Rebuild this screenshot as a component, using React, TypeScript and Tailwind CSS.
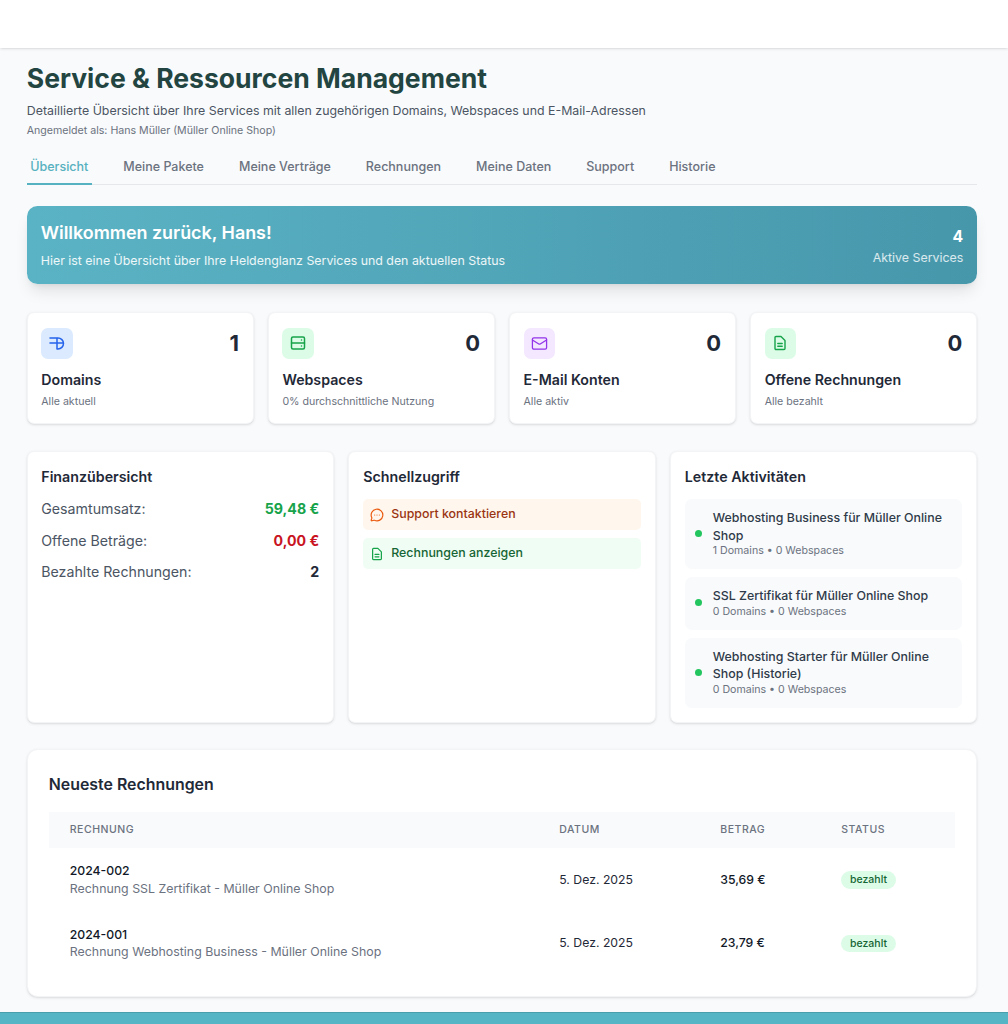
import { Mail, MessageCircleMore } from 'lucide-react'

const tabs = ['Übersicht', 'Meine Pakete', 'Meine Verträge', 'Rechnungen', 'Meine Daten', 'Support', 'Historie']

function DomainIcon() {
  return (
    <svg viewBox="0 0 16 16" className="h-4 w-4 text-[#2563eb]" fill="none" stroke="currentColor" strokeWidth="1.5" strokeLinecap="round" strokeLinejoin="round">
      <path d="M1 3h8a5.5 5.5 0 0 1 0 11H8V3M1 8h13" />
    </svg>
  )
}

function ServerIcon() {
  return (
    <svg viewBox="0 0 16 16" className="h-4 w-4 text-[#16a34a]" fill="none" stroke="currentColor" strokeWidth="1.5" strokeLinecap="round" strokeLinejoin="round">
      <rect x="1.5" y="2" width="13" height="12" rx="1.5" />
      <path d="M1.5 8h13M11.5 5h.01M11.5 11h.01" />
    </svg>
  )
}

function DocIcon({ className }: { className: string }) {
  return (
    <svg viewBox="0 0 16 16" className={className} fill="none" stroke="currentColor" strokeWidth="1.4" strokeLinecap="round" strokeLinejoin="round">
      <path d="M4 1.5h5l4 4v8a1 1 0 0 1-1 1H4a1 1 0 0 1-1-1v-11a1 1 0 0 1 1-1z" />
      <path d="M5.8 8.5h4.4M5.8 11.2h4.4" />
    </svg>
  )
}

const stats = [
  { title: 'Domains', sub: 'Alle aktuell', value: '1', box: 'bg-[#dbeafe]', icon: <DomainIcon /> },
  { title: 'Webspaces', sub: '0% durchschnittliche Nutzung', value: '0', box: 'bg-[#dcfce7]', icon: <ServerIcon /> },
  { title: 'E-Mail Konten', sub: 'Alle aktiv', value: '0', box: 'bg-[#f3e8ff]', icon: <Mail className="h-[17px] w-[17px] text-[#9333ea]" strokeWidth={1.8} /> },
  { title: 'Offene Rechnungen', sub: 'Alle bezahlt', value: '0', box: 'bg-[#dcfce7]', icon: <DocIcon className="h-4 w-4 text-[#16a34a]" /> },
]

const activities = [
  { title: 'Webhosting Business für Müller Online Shop', sub: '1 Domains • 0 Webspaces' },
  { title: 'SSL Zertifikat für Müller Online Shop', sub: '0 Domains • 0 Webspaces' },
  { title: 'Webhosting Starter für Müller Online Shop (Historie)', sub: '0 Domains • 0 Webspaces' },
]

const invoices = [
  { nr: '2024-002', desc: 'Rechnung SSL Zertifikat - Müller Online Shop', date: '5. Dez. 2025', sum: '35,69 €' },
  { nr: '2024-001', desc: 'Rechnung Webhosting Business - Müller Online Shop', date: '5. Dez. 2025', sum: '23,79 €' },
]

export default function App() {
  return (
    <div className="flex min-h-[1024px] flex-col bg-[#f9fafb] font-['Inter',sans-serif]">
      <header className="h-[48px] bg-white shadow-sm" />

      <main className="flex-1 pt-[15px] pr-[30.75px] pb-[15px] pl-[26.75px]">
        <h1 className="text-[26.55px] leading-[31.5px] font-bold text-[#234542]">Service &amp; Ressourcen Management</h1>
        <p className="mt-[7px] text-[12.39px] leading-[17.5px] text-[#4b5563]">
          Detaillierte Übersicht über Ihre Services mit allen zugehörigen Domains, Webspaces und E-Mail-Adressen
        </p>
        <p className="mt-[4.5px] text-[10.62px] leading-[14px] text-[#6b7280]">Angemeldet als: Hans Müller (Müller Online Shop)</p>

        {/* Tabs */}
        <nav className="mt-[14px] flex gap-[28px] border-b border-[#e5e7eb]">
          {tabs.map((t, i) => (
            <span
              key={t}
              className={
                i === 0
                  ? 'border-b-2 border-[#56b1c0] px-[3.5px] pt-[6px] pb-[7.5px] text-[12.5px] leading-[17.5px] font-[450] text-[#56b1c0] -mb-px'
                  : 'border-b-2 border-transparent px-[3.5px] pt-[6px] pb-[7.5px] text-[12.5px] leading-[17.5px] font-[450] text-[#6b7280] -mb-px'
              }
            >
              {t}
            </span>
          ))}
        </nav>

        {/* Welcome banner */}
        <section className="mt-[21px] flex h-[78px] items-center justify-between rounded-[10.5px] bg-gradient-to-r from-[#5ab3c4] to-[#4797ab] px-[14px] pt-[2px] text-white shadow-lg">
          <div>
            <h2 className="text-[17.9px] leading-[24.5px] font-semibold">Willkommen zurück, Hans!</h2>
            <p className="mt-[6.5px] text-[12.39px] leading-[17.5px] text-white/90">
              Hier ist eine Übersicht über Ihre Heldenglanz Services und den aktuellen Status
            </p>
          </div>
          <div className="text-right">
            <div className="text-[15.75px] leading-[24.5px] font-bold">4</div>
            <div className="text-[12.39px] leading-[17.5px] text-white/80">Aktive Services</div>
          </div>
        </section>

        {/* Stat cards */}
        <section className="mt-[28px] grid grid-cols-4 gap-[14px]">
          {stats.map((s) => (
            <div key={s.title} className="rounded-[7px] border border-[#f3f4f6] bg-white pt-[15px] pr-[14px] pb-[14px] pl-[13.5px] shadow-sm">
              <div className="flex items-center justify-between">
                <div className={`flex h-[31.5px] w-[31.5px] items-center justify-center rounded-[7px] ${s.box}`}>{s.icon}</div>
                <span className="text-[22px] leading-[28px] font-bold text-[#1f2937]">{s.value}</span>
              </div>
              <h3 className="mt-[9.5px] text-[14.2px] leading-[21px] font-semibold text-[#1f2937]">{s.title}</h3>
              <p className="mt-[5.5px] text-[10.62px] leading-[14px] text-[#6b7280]">{s.sub}</p>
            </div>
          ))}
        </section>

        {/* Panels */}
        <section className="mt-[27px] grid grid-cols-3 gap-[14px]">
          <div className="rounded-[7px] border border-[#f3f4f6] bg-white py-[14px] pr-[14px] pl-[13.5px] shadow-sm">
            <h3 className="mb-[11px] text-[14.25px] leading-[21px] font-semibold text-[#1f2937]">Finanzübersicht</h3>
            <div className="flex flex-col gap-[10.5px] text-[14.2px] leading-[21px]">
              <div className="flex justify-between">
                <span className="text-[#4b5563]">Gesamtumsatz:</span>
                <span className="font-bold text-[#16a34a]">59,48 €</span>
              </div>
              <div className="flex justify-between">
                <span className="text-[#4b5563]">Offene Beträge:</span>
                <span className="font-bold text-[#c9141f]">0,00 €</span>
              </div>
              <div className="flex justify-between">
                <span className="text-[#4b5563]">Bezahlte Rechnungen:</span>
                <span className="font-bold text-[#1f2937]">2</span>
              </div>
            </div>
          </div>

          <div className="rounded-[7px] border border-[#f3f4f6] bg-white p-[14px] shadow-sm">
            <h3 className="mb-[12px] text-[14.25px] leading-[21px] font-semibold text-[#1f2937]">Schnellzugriff</h3>
            <div className="flex flex-col gap-[8px]">
              <a className="flex h-[31px] items-center gap-[7px] rounded-[5px] bg-[#fff7ed] px-[7px] text-[12.39px] font-[450] text-[#9a3412]">
                <MessageCircleMore className="h-[14px] w-[14px] text-[#ea580c]" strokeWidth={2} />
                Support kontaktieren
              </a>
              <a className="flex h-[31px] items-center gap-[7px] rounded-[5px] bg-[#f0fdf4] px-[7px] text-[12.39px] font-[450] text-[#166534]">
                <DocIcon className="h-[14px] w-[14px] text-[#16a34a]" />
                Rechnungen anzeigen
              </a>
            </div>
          </div>

          <div className="rounded-[7px] border border-[#f3f4f6] bg-white p-[14px] shadow-sm">
            <h3 className="mb-[12px] text-[14.25px] leading-[21px] font-semibold text-[#1f2937]">Letzte Aktivitäten</h3>
            <div className="flex flex-col gap-[8px]">
              {activities.map((a) => (
                <div key={a.title} className="flex items-center gap-[10.5px] rounded-[7px] bg-[#f9fafb] px-[10.5px] pt-[10px] pb-[11px]">
                  <span className="h-[7px] w-[7px] shrink-0 rounded-full bg-[#22c55e]" />
                  <div>
                    <p className="text-[12.39px] leading-[17.5px] font-[450] text-[#2f3a4a]">{a.title}</p>
                    <p className="text-[10.62px] leading-[14px] text-[#6b7280]">{a.sub}</p>
                  </div>
                </div>
              ))}
            </div>
          </div>
        </section>

        {/* Invoices */}
        <section className="mt-[26px] rounded-[10.5px] border border-[#f3f4f6] bg-white px-[21px] pt-[23.5px] pb-[21px] shadow-sm">
          <h2 className="mb-[14px] text-[15.9px] leading-[24.5px] font-semibold text-[#1f2937]">Neueste Rechnungen</h2>
          <div className="grid grid-cols-[489.5px_161px_121px_1fr] items-center bg-[#f9fafb] py-[11px] text-[10.5px] leading-[14px] font-medium tracking-wider text-[#6b7280] uppercase">
            <span className="pl-[21px]">Rechnung</span>
            <span className="pl-[21px]">Datum</span>
            <span className="pl-[21px]">Betrag</span>
            <span className="pl-[21px]">Status</span>
          </div>
          {invoices.map((r) => (
            <div key={r.nr} className="grid grid-cols-[489.5px_161px_121px_1fr] items-center py-[14.5px] text-[12.25px] leading-[17.5px]">
              <div className="pl-[21px]">
                <div className="font-medium text-[#111827]">{r.nr}</div>
                <div className="text-[12.39px] leading-[17px] text-[#6b7280]">{r.desc}</div>
              </div>
              <div className="pl-[21px] text-[#1f2937]">{r.date}</div>
              <div className="pl-[21px] font-medium text-[#111827]">{r.sum}</div>
              <div className="pl-[21px]">
                <span className="inline-block rounded-full bg-[#dcfce7] px-[8.75px] text-[10.5px] leading-[17.5px] font-medium text-[#166534]">bezahlt</span>
              </div>
            </div>
          ))}
        </section>
      </main>

      <footer className="h-[12px] border-t border-[#4a9fad] bg-[#55b5c4]" />
    </div>
  )
}
